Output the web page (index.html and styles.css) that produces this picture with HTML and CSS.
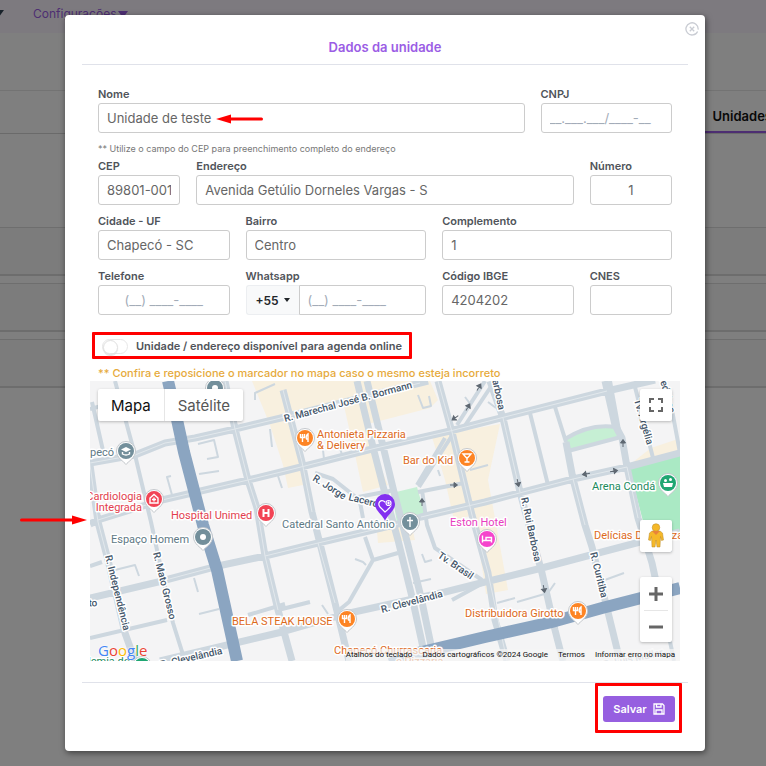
FILE: index.html
```html
<!DOCTYPE html>
<html lang="pt-BR">
<head>
<meta charset="utf-8">
<meta name="viewport" content="width=device-width, initial-scale=1">
<title>Dados da unidade</title>
<link rel="stylesheet" href="styles.css">
</head>
<body>
<div class="page">
  <nav class="nav"><span class="caret nav-first"></span><a href="#">Configurações<span class="caret"></span></a></nav>
  <div class="subhead"></div>
  <div class="tabs"><a class="tab" href="#">Unidades</a></div>
  <div class="cards">
    <div class="card"></div>
    <div class="card"></div>
    <div class="card"></div>
  </div>
</div>

<div class="backdrop">
  <section class="modal" role="dialog" aria-labelledby="title">
    <button class="close" type="button" aria-label="Fechar">
      <svg viewBox="0 0 14 14" width="14" height="14"><path d="M12.6 9.4A6.1 6.1 0 1 1 13.1 7.6M9.8 12.4A6.1 6.1 0 0 0 11.6 11.1"/><path d="M4.8 4.8l4.4 4.4M9.2 4.8L4.800 9.200"/></svg>
    </button>
    <header class="modal-head"><h1 id="title">Dados da unidade</h1></header>

    <form class="form">
      <div class="row">
        <div class="field w9">
          <label for="nome">Nome</label>
          <input id="nome" value="Unidade de teste">
          <svg class="arrow arrow-name" viewBox="0 0 47 10" width="47" height="10"><path d="M12 5H45.500"/><path class="head" d="M0 5L15 .5v9z"/></svg>
        </div>
        <div class="field w3"><label for="cnpj">CNPJ</label><input id="cnpj" placeholder="__.___.___/____-__"></div>
      </div>
      <p class="note">** Utilize o campo do CEP para preenchimento completo do endereço</p>
      <div class="rows">
        <div class="row">
          <div class="field w2"><label for="cep">CEP</label><input id="cep" value="89801-001"></div>
          <div class="field w8"><label for="end">Endereço</label><input id="end" value="Avenida Getúlio Dorneles Vargas - S"></div>
          <div class="field w2"><label for="num">Número</label><input id="num" class="center" value="1"></div>
        </div>
        <div class="row">
          <div class="field w3"><label for="cid">Cidade - UF</label><input id="cid" value="Chapecó - SC"></div>
          <div class="field w4"><label for="bai">Bairro</label><input id="bai" value="Centro"></div>
          <div class="field w5"><label for="com">Complemento</label><input id="com" value="1"></div>
        </div>
        <div class="row">
          <div class="field w3"><label for="tel">Telefone</label><input id="tel" class="center" placeholder="(__) ____-____"></div>
          <div class="field w4"><label for="wha">Whatsapp</label>
            <div class="group"><button type="button" class="ddi">+55<span class="caret small"></span></button><input id="wha" placeholder="(__) ____-____"></div>
          </div>
          <div class="field w3"><label for="ibge">Código IBGE</label><input id="ibge" value="4204202"></div>
          <div class="field w2"><label for="cnes">CNES</label><input id="cnes"></div>
        </div>
      </div>
      <div class="agenda"><input type="checkbox" role="switch" id="agenda"><label for="agenda">Unidade / endereço disponível para agenda online</label></div>
      <p class="warn">** Confira e reposicione o marcador no mapa caso o mesmo esteja incorreto</p>
    </form>

    <div class="map">
      <svg class="map-art" viewBox="90 381 590 280" preserveAspectRatio="xMidYMid slice" role="img" aria-label="Mapa de Chapecó">
        <defs>
          <g id="pin"><path class="pin-edge" d="M0 13.500C-2 10.500-9.500 7-9.500 0a9.500 9.500 0 0 1 19 0C9.500 7 2 10.500 0 13.500z"/><circle r="8"/></g>
          <g id="food"><path d="M-2.500-4V4M-4.500-4v3.500h4V-4M3 4V-4C1-3 1 0 1.500 1H3"/></g>
          <path id="one-way" d="M-4 0H3M0-2.500L3.500 0 0 2.500z"/>
        </defs>
        <g class="built">
          <path d="M252 381H430L364 400 372 447 388 485 363 492 354 450 344 406 289 419 300 462 303 485 288 488 283 465 270 425z"/>
          <path d="M344 406L430 381 438 400 430 408 364 425z"/>
          <path d="M432 437L456 432 500 424 488 480 508 590 486 594 474 515 454 520 445 480z"/>
          <path d="M377 532L411 523 415 540 378 543z"/>
          <path d="M651 448L678 439 680 453 628 466z"/>
        </g>
        <g class="park">
          <path d="M565 439Q586 424 614 426L621 437 568 451z"/>
          <path d="M392 493L417 487 425 515 397 523z"/>
          <path class="deep" d="M629 468L680 455V532L648 540z"/>
        </g>
        <g class="road thin">
          <path d="M198 444L214 440 218 457 207 459M199 474L219 471M172 495L167 477 171 476M115 570L135 565 139 576M194 578L198 592M199 614L219 609M255 400V393L275 384M270 429L272 447M278 476L282 488M323 450L324 459M340 448L342 455M418 395L423 408 431 406 429 396M355 559L363 562 366 565M422 554L425 562 432 560M413 583L431 579M322 605L328 614M497 603L515 598M517 602L548 593 555 583M602 581L624 573M488 402L496 408M465 397L471 405M664 380L668 396M438 470L440 476M660 548L672 551M470 470L488 465"/>
        </g>
        <g class="road mid">
          <path d="M92 402L104 455M115 381L135 455 151 522 157 550 173 623 185 661M90 638L167 620M90 409L112 403M90 566L102 562M530 413L548 485M555 407L566 442M635 387L653 458M672 410L680 453M565 439Q590 423 616 427M568 451L621 437M360 502L363 518M418 492L464 483M422 490L427 525 435 548 482 580M365 537L373 560 398 553M373 560L349 602 338 611M485 381L457 425M490 388L462 430M445 438L417 485M453 434L419 487M395 490L353 498M315 473L333 479 357 498M278 610L310 602M610 381L619 430M452 600L485 582M660 592L674 661M248 615L285 604"/>
        </g>
        <g class="road wide">
          <path d="M90 463L135 455 165 443 195 438 235 429 285 417 428 381M90 524L98 520 162 500 248 480 285 471 376 448 450 431 485 422 607 391 655 380M90 598L158 582 218 566 265 556 318 543 398 524 421 517 485 502 573 479 627 467 680 453M160 661L223 646 282 632 345 614 445 592 485 582 538 569 602 552 640 542 680 532M90 465L98 522 108 560 125 633 135 661M225 381L235 429 248 480 257 508 265 556 278 610 292 661M283 390L302 462 312 512 335 603 349 661M357 381L373 447 383 486 398 540 412 597 426 661M367 381L382 442 394 492 408 545 421 597 431 645M438 381L452 432 472 515 488 573 495 620 507 661M490 381L503 418 520 492 542 573 555 630 563 661M566 442L573 479 585 525 592 547 605 600 620 661M605 381L615 425 622 438 627 467 638 518 652 563 660 600"/>
        </g>
        <g class="road seam">
          <path d="M90 463L135 455 165 443 195 438 235 429 285 417 420 383M98 520L162 500 248 480 285 471 376 448 450 431 485 422 607 391M265 556L318 543 398 524M421 517L485 502 573 479 627 467M158 582L218 566M90 465L98 522 108 560 125 633M225 381L235 429 248 480 257 508 265 556 278 610M283 390L302 462 312 512M438 381L452 432 472 515 488 573 507 661M503 418L520 492M573 479L585 525M627 467L638 518M318 543L335 603"/>
        </g>
        <g class="avenue"><path d="M168 381L176 415 184 452 203 525 217 570 237 661M390 664L418 653 485 637 552 622 602 608 680 588"/></g>
        <g class="ways"><use href="#one-way" transform="translate(479 387) rotate(-60)"/><use href="#one-way" transform="translate(468 407) rotate(-60)"/><use href="#one-way" transform="translate(455 418) rotate(145)"/><use href="#one-way" transform="translate(454 485)"/><use href="#one-way" transform="translate(422 502) rotate(-90)"/><use href="#one-way" transform="translate(518 483) rotate(78)"/><use href="#one-way" transform="translate(586 474) rotate(170)"/><use href="#one-way" transform="translate(614 471) rotate(-10)"/><use href="#one-way" transform="translate(623 443) rotate(-90)"/><use href="#one-way" transform="translate(544 589) rotate(80)"/></g>

        <g class="street">
          <text class="large" transform="translate(285 422) rotate(-15)">R. Marechal José B. Bormann</text>
          <text transform="translate(312 480) rotate(32)">R. Jorge</text>
          <text transform="translate(348 500) rotate(14)">Lacerda</text>
          <text transform="translate(382 613) rotate(-15)">R. Clevelândia</text>
          <text transform="translate(161 668) rotate(-13)">R. Clevelândia</text>
          <text transform="translate(105 556) rotate(76)">R. Independência</text>
          <text transform="translate(153 553) rotate(76)">R. Mato Grosso</text>
          <text transform="translate(437 557) rotate(34)">Tv. Brasil</text>
          <text transform="translate(521 498) rotate(78)">R. Rui Barbosa</text>
          <text transform="translate(590 553) rotate(76)">R. Curitiba</text>
          <text transform="translate(491 374) rotate(78)">Barbosa</text>
          <text transform="translate(634 400) rotate(74)">Tv. Argélia</text>
          <text transform="translate(658 373) rotate(75)">Medeiros</text>
          <text transform="translate(83 607) rotate(-4)">oto</text>
          <text class="faint" transform="translate(604 668) rotate(-12)">R. Luis Müller</text>
        </g>
        <g class="poi slate"><text x="114" y="456" text-anchor="end">Chapecó</text><text x="111" y="543">Espaço Homem</text><text x="282" y="528">Catedral Santo Antônio</text></g>
        <g class="poi red"><text x="142" y="500" text-anchor="end">Cardiologia</text><text x="142" y="511" text-anchor="end">Integrada</text><text x="171" y="519">Hospital Unimed</text></g>
        <g class="poi orange"><text x="317" y="438">Antonieta Pizzaria</text><text x="317" y="449">&amp; Delivery</text><text x="403" y="464">Bar do Kid</text><text x="232" y="625">BELA STEAK HOUSE</text><text x="465" y="617">Distribuidora Girotto</text><text x="594" y="539">Delícias Da Pizzza</text><text x="334" y="654">Chapecó Churrascaria</text><text x="396" y="665">e Pizzaria</text></g>
        <g class="poi green"><text x="592" y="490">Arena Condá</text><text x="130" y="665" text-anchor="end">Academia do</text></g>
        <g class="poi pink"><text x="450" y="526">Eston Hotel</text></g>

        <g class="pins">
          <g class="p-slate" transform="translate(126 451)"><use href="#pin"/><path class="fill" d="M-5-1.500L0-4 5-1.500 0 1z"/><path d="M-3.500 1v2Q0 5 3.500 3V1"/></g>
          <g class="p-slate" transform="translate(215 388)"><use href="#pin"/><circle class="fill" r="3"/></g>
          <g class="p-slate" transform="translate(203 537)"><use href="#pin"/><circle class="fill" r="3"/></g>
          <g class="p-slate" transform="translate(410 522)"><use href="#pin"/><path d="M0-5V5M-3-1.500H3"/></g>
          <g class="p-red" transform="translate(154 499)"><use href="#pin"/><path d="M-4 4V-1L0-4.500 4-1V4zM0-1.500v4M-2 .5H2"/></g>
          <g class="p-red" transform="translate(266 513)"><use href="#pin"/><path class="bold" d="M-2.500-4V4M2.500-4V4M-2.500 0h5"/></g>
          <g class="p-orange" transform="translate(305 438)"><use href="#pin"/><use href="#food"/></g>
          <g class="p-orange" transform="translate(467 458)"><use href="#pin"/><path d="M-4-4H4L0 .5zM0 0V4M-2.500 4h5"/></g>
          <g class="p-orange" transform="translate(347 619)"><use href="#pin"/><use href="#food"/></g>
          <g class="p-orange" transform="translate(578 611)"><use href="#pin"/><use href="#food"/></g>
          <g class="p-green" transform="translate(668 483)"><use href="#pin"/><path class="fill" d="M-5 0H5L4 4H-4z"/><circle class="fill" cx="-2.500" cy="-2.500" r="1.500"/><circle class="fill" cx="2.500" cy="-3.500" r="1.500"/></g>
          <g class="p-green" transform="translate(142 666)"><use href="#pin"/></g>
          <g class="p-pink" transform="translate(487 539)"><use href="#pin"/><path d="M-4.500-3.500V3.500M-4.500 1.500h9v2M4.500 1.500v-3H-1v3"/></g>
          <g transform="translate(385 506)"><path class="unit" d="M0 15C-2 9-10 5-10-2a10 10 0 0 1 20 0C10 5 2 9 0 15z"/><path class="heart" d="M0 6L-5 1C-8-3-4-8 0-4 3-7 7-5 6-1Q6 1 0 6z"/><circle class="unit" cx="3.500" cy="-3" r="3.500"/><circle class="heart" cx="3.500" cy="-3" r="2.500"/><path class="heart" d="M3.500-4.500v3M2-3h3"/></g>
        </g>
      </svg>

      <div class="map-types"><button type="button" class="active">Mapa</button><button type="button">Satélite</button></div>
      <button type="button" class="ctl full" aria-label="Tela cheia"><svg viewBox="0 0 16 16" width="16" height="16"><path d="M2 6V2H6M10 2h4V6M14 10v4H10M6 14H2V10"/></svg></button>
      <button type="button" class="ctl pegman" aria-label="Street View"><svg viewBox="0 0 16 26" width="16" height="26"><path class="coat" d="M4 8h8l2.500 2 1 7-2 .5-1-4L12 24H9l-1-7-1 7H4l-.5-10.500-1 4-2-.5 1-7z"/><circle class="coat" cx="8" cy="4.500" r="3.800"/><path class="scarf" d="M4 8h8l-4 4z"/></svg></button>
      <div class="zoom"><button type="button" aria-label="Aumentar zoom"><svg viewBox="0 0 16 16" width="16" height="16"><path d="M1 8h14M8 1v14"/></svg></button><button type="button" aria-label="Diminuir zoom"><svg viewBox="0 0 16 16" width="16" height="16"><path d="M1 8h14"/></svg></button></div>
      <div class="google"><span class="b">G</span><span class="r">o</span><span class="y">o</span><span class="b">g</span><span class="g">l</span><span class="r">e</span></div>
      <div class="legal"><button type="button">Atalhos do teclado</button><span>Dados cartográficos ©2024 Google</span><a href="#">Termos</a><a href="#">Informar erro no mapa</a></div>
      <svg class="arrow arrow-map" viewBox="0 0 67 10" width="67" height="10"><path d="M1.500 5H54"/><path class="head" d="M67 5L52 .5v9z"/></svg>
    </div>

    <footer class="modal-foot"><div class="save-box"><button type="button" class="save">Salvar<svg viewBox="0 0 12 12" width="12" height="12"><path d="M1 1H9.500L11 2.500V11H1zM3.500 1V4h4.500V1M3 11V7H9V11"/></svg></button></div></footer>
  </section>
</div>
</body>
</html>
```
FILE: styles.css
```css
* { box-sizing: border-box; }
body { margin: 0; background: #fff; font-family: Inter, "Liberation Sans", sans-serif; font-size: 14px; color: #555; }
button, input { font: inherit; color: inherit; }
a { color: inherit; text-decoration: none; }
p, h1 { margin: 0; }

.page { height: 100vh; overflow: hidden; }
.nav { display: flex; align-items: center; gap: 29px; height: 33px; padding-bottom: 7px; background: #fbf5ff; color: #9b5de5; font-size: 12px; }
.nav-first { margin-left: -6px; color: #345; }
.caret { display: inline-block; border: 5px solid transparent; border-top: 7px solid currentColor; border-bottom: 0; }
.nav a .caret { margin-left: 1px; }
.nav a { white-space: nowrap; }
.subhead { height: 58px; border-bottom: 1px solid #e6e6e6; }
.tabs { display: flex; justify-content: flex-end; height: 43px; border-bottom: 1px solid #d4d4d4; }
.tab { padding: 16px 8px 0; margin-right: -14px; border-bottom: 2px solid #9b5de5; font-size: 13px; line-height: 18px; font-weight: 600; color: #111; }
.cards { display: flex; flex-direction: column; gap: 7px; padding-top: 93px; }
.card { height: 49px; background: #f8f8f8; border-top: 1px solid #dcdcdc; border-bottom: 2px solid #dadada; }

.backdrop { position: absolute; inset: 0; padding: 15px 61px 15px 65px; background: rgba(0, 0, 0, .5); }
.modal { position: relative; background: #fff; border-radius: 4px; box-shadow: 1px 2px 6px rgba(0, 0, 0, .5); }
.close { position: absolute; top: 7px; right: 6px; padding: 0; border: 0; background: none; width: 14px; height: 14px; }
.close svg, .ctl svg, .zoom svg, .save svg { display: block; fill: none; }
.close svg { stroke: #c9ccd3; stroke-width: 1.300; }
.modal-head { margin: 0 17px; padding: 20px 0 5px; border-bottom: 1px solid #e0e2ea; text-align: center; }
.modal-head h1 { font-size: 13px; line-height: 24px; font-weight: 600; color: #9b5de5; }

.form { padding: 20px 33px 0; }
.rows { display: grid; gap: 7px; }
.row { display: grid; grid-template-columns: repeat(12, minmax(0, 1fr)); column-gap: 16px; }
.field { position: relative; }
.w2 { grid-column: span 2; }
.w3 { grid-column: span 3; }
.w4 { grid-column: span 4; }
.w5 { grid-column: span 5; }
.w8 { grid-column: span 8; }
.w9 { grid-column: span 9; }
.field label { display: block; font-size: 11px; line-height: 18px; font-weight: 600; color: #50545a; white-space: nowrap; }
.field input { display: block; width: 100%; height: 30px; padding: 0 8px; border: 1px solid #ccc; border-radius: 3px; background: #fff; font-size: 13px; color: #666; }
.field input::placeholder { color: #a3acb8; opacity: 1; }
.field .center { text-align: center; }
.group { display: flex; }
.group input { flex: 1; min-width: 0; border-radius: 0 3px 3px 0; }
.ddi { display: flex; align-items: center; justify-content: center; gap: 5px; width: 53px; border: 1px solid #eceef1; border-right: 0; border-radius: 3px 0 0 3px; background: #f8f9fa; font-size: 12px; font-weight: 600; color: #212529; }
.small { border-width: 4px 3px 0; }
.note { margin-top: 8px; font-size: 9px; line-height: 16px; color: #777; }
.agenda { display: flex; align-items: center; width: max-content; height: 27px; margin: 17px 0 6px -6px; padding: 0 7px 0 7px; gap: 8px; border: 3px solid #f00; border-radius: 1px; font-size: 11px; font-weight: 600; color: #50545a; }
.agenda input { appearance: none; width: 26px; height: 15px; margin: 2px 0 0; border: 1px solid #e7e7e7; border-radius: 8px; background: #fff; }
.agenda input::before { content: ""; display: block; width: 13px; height: 13px; border: 1px solid #e0e0e0; border-radius: 50%; box-shadow: 0 1px 1px #ddd; }
.warn { font-size: 11px; line-height: 16px; font-weight: 500; color: #e6aa3b; }

.map { position: relative; height: 280px; margin: 0 25px; background: #f4f4f5; }
.map-art { display: block; width: 100%; height: 100%; font-family: Roboto, sans-serif; font-size: 11px; }
.built { fill: #f8f0df; }
.park { fill: #c6efd4; }
.park .deep { fill: #aae9c4; }
.road { fill: none; stroke: #cdd7df; stroke-linejoin: round; }
.thin { stroke-width: 2px; }
.mid { stroke-width: 4px; }
.wide { stroke-width: 7px; }
.seam { stroke: #e2e8ec; stroke-width: 1px; }
.avenue { fill: none; stroke: #8ba5c1; stroke-width: 12px; }
.ways { fill: #5f6872; stroke: #5f6872; stroke-width: 1px; }
.street text, .poi text { paint-order: stroke; stroke: #fff; stroke-width: 3px; stroke-linejoin: round; }
.street { fill: #44566a; font-size: 10px; font-weight: 500; }
.street .large { font-size: 10px; }
.street .faint { fill: #b4bcc6; }
.poi.slate { fill: #607985; }
.poi.red { fill: #e23e4e; }
.poi.orange { fill: #dd6a1c; }
.poi.green { fill: #1a8a5c; }
.poi.pink { fill: #e83dc0; }
.pin-edge { fill: #fff; stroke: #c4c8cc; stroke-width: 1px; }
.pins path { stroke-width: 1.400; }
.pins g > path { fill: none; stroke: #fff; }
.pins .fill { fill: #fff; stroke: none; }
.pins .bold { stroke-width: 2; }
#food path { fill: none; stroke: #fff; stroke-width: 1.400; }
.p-slate { fill: #738f9b; }
.p-red { fill: #f24455; }
.p-orange { fill: #fd8424; }
.p-green { fill: #1fa672; }
.p-pink { fill: #f545cc; }
.pins g > .unit { fill: #8330f0; stroke: none; }
.pins g > .heart { fill: none; stroke: #fff; stroke-width: 1.200; }

.map-types { position: absolute; top: 8px; left: 8px; display: flex; height: 32px; border-radius: 2px; background: #fff; box-shadow: 0 1px 3px rgba(0, 0, 0, .25); }
.map-types button { padding: 0 13px; border: 0; background: none; font-size: 15px; color: #565656; }
.map-types .active { border-right: 1px solid #e6e6e6; color: #111; }
.ctl, .zoom { position: absolute; right: 8px; width: 32px; border: 0; border-radius: 2px; background: #fff; box-shadow: 0 1px 3px rgba(0, 0, 0, .25); }
.ctl { display: grid; place-items: center; height: 32px; padding: 0; }
.full { top: 8px; }
.full svg { stroke: #666; stroke-width: 2; }
.pegman { top: 139px; }
.coat { fill: #f5b829; stroke: #b98a2c; stroke-width: .5; }
.scarf { fill: #e8833a; }
.zoom { top: 196px; }
.zoom button { display: grid; place-items: center; width: 24px; height: 33px; margin: 0 4px; padding: 0; border: 0; background: none; }
.zoom button + button { height: 32px; border-top: 1px solid #e6e6e6; }
.zoom svg { stroke: #666; stroke-width: 3; }
.google { position: absolute; left: 8px; bottom: 1px; font-family: "Open Sans", sans-serif; font-size: 15px; line-height: 20px; text-shadow: 0 0 2px #fff, 0 0 2px #fff; }
.b { color: #4285f4; }
.r { color: #ea4335; }
.y { color: #fbbc05; }
.g { color: #34a853; }
.legal { position: absolute; right: 0; bottom: 0; display: flex; gap: 10px; padding-right: 5px; font-family: Roboto, sans-serif; font-size: 8px; line-height: 12px; color: #111; white-space: nowrap; background: rgba(245, 245, 245, .7); }
.legal button { padding: 0; border: 0; background: none; }
.arrow { position: absolute; overflow: visible; fill: none; stroke: #f00; stroke-width: 3; stroke-linecap: round; }
.arrow .head { fill: #f00; stroke: none; }
.arrow-name { left: 118px; top: 29px; }
.arrow-map { left: -70px; top: 134px; }

.modal-foot { display: flex; justify-content: flex-end; margin: 21px 17px 0; padding: 0 6px 18px; border-top: 1px solid #e0e2ea; }
.save-box { padding: 10px 4px 8px 5px; border: 3px solid #f00; border-radius: 1px; }
.save { display: flex; align-items: center; justify-content: center; gap: 6px; width: 72px; height: 26px; padding: 0; border: 0; border-radius: 3px; background: #965fe0; color: #fff; font-size: 11px; font-weight: 600; }
.save svg { stroke: #fff; stroke-width: 1.300; }
```
